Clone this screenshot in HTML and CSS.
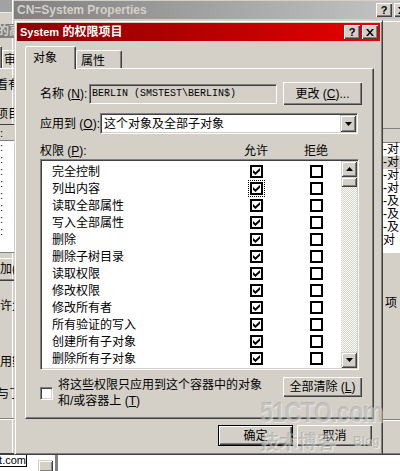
FILE: index.html
```html
<!DOCTYPE html>
<html lang="zh-CN">
<head>
    <meta charset="UTF-8">
    <title>System 的权限项目</title>
    <link rel="stylesheet" href="styles.css">
</head>
<body>

<div class="desk">

    <!-- window behind: CN=System Properties -->
    <div class="win back">
        <div class="cap cap-off">
            <span class="cap-text">CN=System Properties</span>
            <span class="cap-btn">?</span>
            <span class="cap-btn"><svg width="8" height="7" viewBox="0 0 8 7"><path d="M0 0h2l2 2.4L6 0h2L5 3.5 8 7H6L4 4.6 2 7H0l3-3.5z"/></svg></span>
        </div>
        <div class="back-body">
            <div class="back-col">
                <div class="back-line"></div>
                <div class="back-list">
                    <div class="back-head"></div>
                    <div class="back-row">-对</div>
                    <div class="back-row sel">-对</div>
                    <div class="back-row">-对</div>
                    <div class="back-row">-对</div>
                    <div class="back-row">-及</div>
                    <div class="back-row">-及</div>
                    <div class="back-row">-及</div>
                    <div class="back-row">对</div>
                </div>
                <div class="back-text">项</div>
                <div class="back-foot"></div>
            </div>
        </div>
    </div>

    <div class="far"></div>

    <!-- window on the left, mostly hidden -->
    <div class="side">
        <div class="side-cap">的高</div>
        <div class="side-tabs">
            <div class="side-tab-a"></div>
            <div class="side-tab-b">审</div>
        </div>
        <div class="side-top"></div>
        <div class="side-text t1">看有</div>
        <div class="side-text t2">项目</div>
        <div class="side-list">
            <div class="side-head">:</div>
            <div class="side-row">:</div>
            <div class="side-row">:</div>
            <div class="side-row">:</div>
            <div class="side-row">:</div>
            <div class="side-row">:</div>
            <div class="side-row">:</div>
            <div class="side-row">:</div>
            <div class="side-row">:</div>
        </div>
        <div class="side-btn">加(</div>
        <div class="side-text t3">许父</div>
        <div class="side-text t4">用數</div>
        <div class="side-text t5">与了</div>
        <div class="side-foot"></div>
    </div>

    <!-- the dialog -->
    <div class="win dlg">
        <div class="cap cap-on">
            <span class="cap-text"><span class="cap-latin">System</span> 的权限项目</span>
            <span class="cap-btn">?</span>
            <span class="cap-btn"><svg width="8" height="7" viewBox="0 0 8 7"><path d="M0 0h2l2 2.4L6 0h2L5 3.5 8 7H6L4 4.6 2 7H0l3-3.5z"/></svg></span>
        </div>

        <div class="tabs">
            <div class="tab tab-on">对象</div>
            <div class="tab">属性</div>
        </div>

        <div class="panel">
            <div class="row row-name">
                <span class="lbl-name">名称 (<u>N</u>):</span>
                <div class="field sunken">BERLIN (SMSTEST\BERLIN$)</div>
                <button class="btn btn-change">更改 (<u>C</u>)...</button>
            </div>

            <div class="row row-apply">
                <span class="lbl-apply">应用到 (<u>O</u>):</span>
                <div class="combo sunken">
                    <span class="combo-text">这个对象及全部子对象</span>
                    <span class="drop raised"><svg width="7" height="4" viewBox="0 0 7 4"><path d="M0 0h7L3.5 4z"/></svg></span>
                </div>
            </div>

            <div class="perm-head">
                <span class="lbl-perm">权限 (<u>P</u>):</span>
                <span class="col-allow">允许</span>
                <span class="col-deny">拒绝</span>
            </div>

            <div class="list sunken">
                <div class="rows">
                    <div class="perm"><span class="perm-name">完全控制</span><span class="chk on"></span><span class="chk"></span></div>
                    <div class="perm"><span class="perm-name">列出内容</span><span class="chk on focus"></span><span class="chk"></span></div>
                    <div class="perm"><span class="perm-name">读取全部属性</span><span class="chk on"></span><span class="chk"></span></div>
                    <div class="perm"><span class="perm-name">写入全部属性</span><span class="chk on"></span><span class="chk"></span></div>
                    <div class="perm"><span class="perm-name">删除</span><span class="chk on"></span><span class="chk"></span></div>
                    <div class="perm"><span class="perm-name">删除子树目录</span><span class="chk on"></span><span class="chk"></span></div>
                    <div class="perm"><span class="perm-name">读取权限</span><span class="chk on"></span><span class="chk"></span></div>
                    <div class="perm"><span class="perm-name">修改权限</span><span class="chk on"></span><span class="chk"></span></div>
                    <div class="perm"><span class="perm-name">修改所有者</span><span class="chk on"></span><span class="chk"></span></div>
                    <div class="perm"><span class="perm-name">所有验证的写入</span><span class="chk on"></span><span class="chk"></span></div>
                    <div class="perm"><span class="perm-name">创建所有子对象</span><span class="chk on"></span><span class="chk"></span></div>
                    <div class="perm"><span class="perm-name">删除所有子对象</span><span class="chk on"></span><span class="chk"></span></div>
                </div>
                <div class="vscroll">
                    <span class="sb-btn raised"><svg width="7" height="4" viewBox="0 0 7 4"><path d="M0 4h7L3.5 0z"/></svg></span>
                    <span class="sb-thumb raised"></span>
                    <span class="sb-track"></span>
                    <span class="sb-btn raised"><svg width="7" height="4" viewBox="0 0 7 4"><path d="M0 0h7L3.5 4z"/></svg></span>
                </div>
            </div>

            <div class="row row-inherit">
                <div class="inherit">
                    <span class="cb3d sunken"></span>
                    <span class="inherit-text">将这些权限只应用到这个容器中的对象<br>和/或容器上 (<u>T</u>)</span>
                </div>
                <button class="btn btn-clear">全部清除 (<u>L</u>)</button>
            </div>
        </div>

        <div class="dlg-btns">
            <button class="btn btn-def">确定</button>
            <button class="btn">取消</button>
        </div>
    </div>

    <!-- site watermark over the screenshot -->
    <div class="mark">
        <span class="mark-big">51CTO.com</span>
        <span class="mark-line"><span class="mark-cn">技术博客</span><span class="mark-blog">Blog</span></span>
    </div>
</div>

<div class="below">
    <div class="url">t.com</div>
    <span class="below-btn raised"></span>
    <span class="below-bar"></span>
</div>

</body>
</html>
```

FILE: styles.css
```css
* {
    box-sizing: border-box;
}
body {
    margin: 0;
    width: 400px;
    height: 471px;
    overflow: hidden;
    background: #fff;
    font-family: "Liberation Sans", "Noto Sans CJK SC", sans-serif;
    font-size: 12px;
    line-height: 14px;
    color: #000;
}
u {
    text-decoration: underline;
}

.desk {
    position: relative;
    height: 455px;
    background: #d4d0c8;
    overflow: hidden;
}

/* window frame */
.win {
    position: absolute;
    background: #d4d0c8;
    border: 1px solid;
    border-color: #d4d0c8 #404040 #404040 #d4d0c8;
    box-shadow: inset 1px 1px #fff, inset -1px -1px #808080;
    padding: 2px;
}
.raised {
    background: #d4d0c8;
    box-shadow: inset 1px 1px #d4d0c8, inset -1px -1px #404040, inset 2px 2px #fff, inset -2px -2px #808080;
}
.sunken {
    border: 1px solid;
    border-color: #808080 #fff #fff #808080;
    box-shadow: inset 1px 1px #404040, inset -1px -1px #d4d0c8;
}

.cap {
    display: flex;
    align-items: center;
    height: 18px;
    padding: 0 2px 0 3px;
    font-weight: bold;
    white-space: nowrap;
}
.cap-on {
    background: linear-gradient(to right, #8c0000, #b00000 45%, #e80000);
    color: #fff;
}
.cap-off {
    background: linear-gradient(to right, #808080, #c6c6c6);
    color: #d4d0c8;
}
.cap-text {
    flex: 1;
    overflow: hidden;
}
.cap-latin {
    font-size: 11px;
}
.cap-btn {
    display: flex;
    align-items: center;
    justify-content: center;
    width: 16px;
    height: 14px;
    background: #d4d0c8;
    box-shadow: inset 1px 1px #fff, inset -1px -1px #404040, inset -2px -2px #808080;
    color: #000;
    font: bold 11px/1 "Liberation Sans", sans-serif;
}
.cap-btn + .cap-btn {
    margin-left: 2px;
}

/* back window */
.back {
    left: 11px;
    top: -2px;
    width: 404px;
    height: 457px;
}
.back-body {
    padding-left: 369px;
}
.back-col {
    width: 17px;
    overflow: hidden;
}
.back-line {
    margin-top: 2px;
    height: 1px;
    background: #fff;
}
.back-list {
    margin-top: 106px;
    height: 125px;
    background: #fff;
    border-top: 1px solid #808080;
}
.back-head {
    height: 14px;
    background: #d4d0c8;
    border-bottom: 1px solid #808080;
}
.back-row {
    height: 13px;
    line-height: 13px;
    white-space: nowrap;
}
.back-row.sel {
    background: #d4d0c8;
}
.back-text {
    margin-top: 44px;
    padding-left: 2px;
    line-height: 13px;
    white-space: nowrap;
}
.back-foot {
    margin-top: 109px;
    height: 2px;
    border-top: 1px solid #808080;
    border-bottom: 1px solid #fff;
}

.far {
    position: absolute;
    left: 0;
    top: 0;
    width: 12px;
    height: 13px;
    background: #a2a2a2;
    border-bottom: 1px solid #e8e8e8;
}

/* left window */
.side {
    position: absolute;
    left: 0;
    top: 21px;
    width: 16px;
    height: 434px;
    overflow: hidden;
    white-space: nowrap;
    border-bottom: 2px solid #404040;
}
.side-cap {
    margin-top: 3px;
    height: 14px;
    line-height: 14px;
    background: #808080;
    color: #d4d0c8;
    font-weight: bold;
    text-indent: -3px;
}
.side-tabs {
    display: flex;
    align-items: flex-end;
    height: 22px;
    margin-top: 8px;
}
.side-tab-a {
    width: 7px;
    height: 22px;
    border-top: 1px solid #fff;
    border-right: 1px solid #404040;
    box-shadow: inset -1px 0 #808080;
}
.side-tab-b {
    width: 20px;
    height: 18px;
    padding: 2px 0 0 1px;
    border-top: 1px solid #fff;
    border-left: 1px solid #fff;
}
.side-top {
    height: 1px;
    background: #fff;
}
.side-text {
    height: 13px;
    line-height: 13px;
    text-indent: -4px;
}
.t1 {
    margin-top: 10px;
}
.t2 {
    margin-top: 16px;
}
.t3 {
    margin-top: 19px;
    text-indent: 0;
}
.t4 {
    margin-top: 43px;
    text-indent: 0;
}
.t5 {
    margin-top: 19px;
    text-indent: -3px;
}
.side-list {
    margin-top: 3px;
    height: 129px;
    background: #fff;
    border-top: 1px solid #404040;
    border-bottom: 1px solid #808080;
    font-size: 11px;
}
.side-head {
    height: 16px;
    line-height: 16px;
    background: #d4d0c8;
    border-bottom: 1px solid #808080;
}
.side-row {
    height: 12px;
    line-height: 12px;
}
.side-btn {
    margin-top: 5px;
    height: 23px;
    line-height: 23px;
    box-shadow: inset 0 1px #fff, inset 0 -1px #404040, inset 0 -2px #808080;
}
.side-foot {
    margin-top: 17px;
    height: 2px;
    border-top: 1px solid #808080;
    border-bottom: 1px solid #fff;
}

/* dialog */
.dlg {
    left: 14px;
    top: 20px;
    width: 369px;
    height: 435px;
}

.tabs {
    display: flex;
    align-items: flex-end;
    height: 27px;
    padding-left: 8px;
}
.tab {
    width: 46px;
    height: 18px;
    padding: 3px 0 0 4px;
    background: #d4d0c8;
    border: 1px solid;
    border-bottom: 0;
    border-color: #fff #404040 #fff #fff;
    border-radius: 2px 2px 0 0;
    box-shadow: inset -1px 0 #808080;
}
.tab-on {
    position: relative;
    z-index: 1;
    width: 51px;
    height: 23px;
    padding: 4px 0 0 7px;
    margin-bottom: -1px;
}

.panel {
    height: 351px;
    margin: 0 6px 0 8px;
    padding: 13px 11px 0 14px;
    border: 1px solid;
    border-color: #fff #404040 #404040 #fff;
    box-shadow: inset -1px -1px #808080;
}

.row {
    display: flex;
    align-items: center;
}
.row-name {
    height: 23px;
}
.lbl-name {
    width: 49px;
    white-space: nowrap;
}
.field {
    display: flex;
    align-items: center;
    width: 188px;
    height: 20px;
    padding-left: 2px;
    font: 10px/16px "Liberation Mono", monospace;
    white-space: nowrap;
}
.btn {
    font: inherit;
    color: #000;
    background: #d4d0c8;
    border: 0;
    padding: 0;
    box-shadow: inset 1px 1px #fff, inset -1px -1px #404040, inset -2px -2px #808080;
    white-space: nowrap;
}
.btn-change {
    width: 79px;
    height: 23px;
    margin-left: 6px;
}

.row-apply {
    height: 21px;
    margin-top: 8px;
}
.lbl-apply {
    width: 60px;
    white-space: nowrap;
}
.combo {
    display: flex;
    align-items: center;
    width: 258px;
    height: 21px;
    padding: 1px;
    background: #fff;
}
.combo-text {
    flex: 1;
    padding-left: 2px;
}
.drop,
.sb-btn {
    display: flex;
    align-items: center;
    justify-content: center;
    width: 16px;
    height: 17px;
}

.perm-head {
    display: flex;
    height: 14px;
    margin-top: 10px;
}
.lbl-perm {
    width: 204px;
}
.col-allow {
    width: 25px;
}
.col-deny {
    margin-left: 35px;
}

.list {
    display: flex;
    width: 319px;
    height: 211px;
    margin-top: 1px;
    padding: 1px;
    background: #fff;
}
.rows {
    flex: 1;
    padding-top: 2px;
}
.perm {
    display: flex;
    align-items: center;
    height: 17px;
    padding-left: 10px;
}
.perm-name {
    width: 198px;
}
.chk {
    width: 13px;
    height: 13px;
    padding: 1px;
    border: 2px solid #000;
    background: #fff;
}
.chk + .chk {
    margin-left: 47px;
}
.chk.on::after {
    content: "";
    display: block;
    width: 7px;
    height: 7px;
    background: #000;
    clip-path: polygon(0 30%, 35% 62%, 100% 0, 100% 38%, 35% 100%, 0 68%);
}
.focus {
    outline: 1px dotted #000;
    outline-offset: 1px;
}

.vscroll {
    display: flex;
    flex-direction: column;
    width: 16px;
}
.sb-btn {
    height: 16px;
}
.sb-thumb {
    height: 10px;
}
.sb-track {
    flex: 1;
    background: repeating-conic-gradient(#d4d0c8 0 25%, #fff 0 50%) 0 0 / 2px 2px;
}

.row-inherit {
    align-items: flex-start;
    margin-top: 7px;
}
.inherit {
    display: flex;
    align-items: center;
}
.cb3d {
    width: 13px;
    height: 13px;
    background: #fff;
}
.inherit-text {
    margin-left: 5px;
    line-height: 16px;
    white-space: nowrap;
}
.btn-clear {
    width: 79px;
    height: 20px;
    margin-left: auto;
}

.dlg-btns {
    display: flex;
    justify-content: flex-end;
    gap: 4px;
    margin-top: 6px;
    padding-right: 8px;
}
.dlg-btns .btn {
    width: 75px;
    height: 21px;
}
.btn-def {
    border: 1px solid #000;
}

/* watermark */
.mark {
    position: absolute;
    left: 260px;
    top: 398px;
    width: 130px;
    pointer-events: none;
    color: rgba(130, 130, 130, 0.35);
    text-shadow: 1px 1px rgba(255, 255, 255, 0.5);
    font-weight: bold;
    white-space: nowrap;
}
.mark-big {
    display: block;
    font: bold 30px/28px "Liberation Sans", sans-serif;
    letter-spacing: -1px;
    transform: scaleX(0.78);
    transform-origin: left;
}
.mark-line {
    display: flex;
    align-items: center;
    margin-top: 4px;
}
.mark-cn {
    font: bold 19px/22px "Noto Sans CJK SC", sans-serif;
}
.mark-blog {
    margin-left: 17px;
    font: bold 12px "Liberation Sans", sans-serif;
}

/* window underneath */
.below {
    display: flex;
    height: 16px;
}
.url {
    display: flex;
    justify-content: flex-end;
    width: 27px;
    height: 12px;
    overflow: hidden;
    line-height: 11px;
    font-size: 11px;
    border-right: 1px solid #000;
    border-bottom: 1px solid #000;
    white-space: nowrap;
}
.below-btn {
    width: 15px;
    height: 12px;
    margin: 5px 0 0 11px;
}
.below-bar {
    width: 3px;
    margin-left: 2px;
    background: #808080;
}
```
